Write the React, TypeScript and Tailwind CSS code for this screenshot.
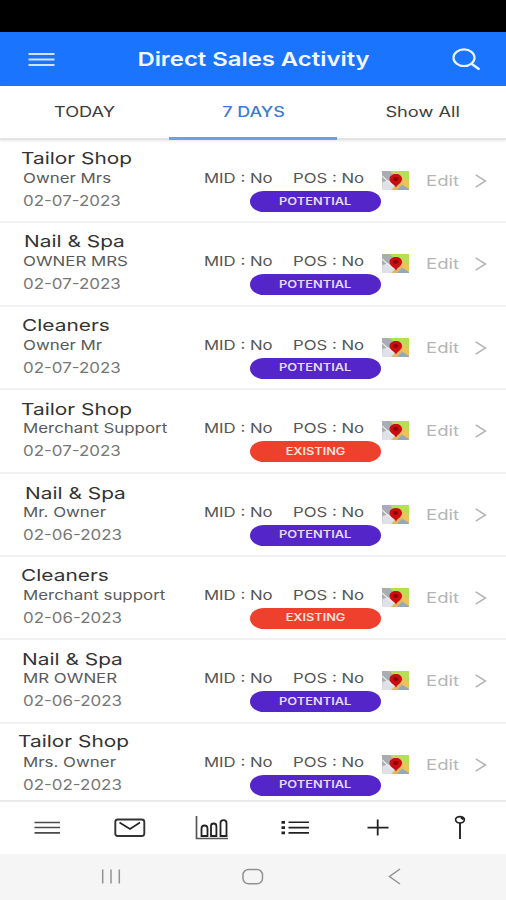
import clsx from 'clsx';

type Visit = {
  name: string;
  owner: string;
  date: string;
  existing?: boolean;
  // spacing of the business name differs slightly from row to row
  nameClass: string;
};

const visits: Visit[] = [
  { name: 'Tailor Shop', owner: 'Owner Mrs', date: '02-07-2023', nameClass: 'pl-[21px] pt-[8px]' },
  { name: 'Nail & Spa', owner: 'OWNER MRS', date: '02-07-2023', nameClass: 'pl-[23.5px] pt-[8px]' },
  { name: 'Cleaners', owner: 'Owner Mr', date: '02-07-2023', nameClass: 'pl-[21.5px] pt-[8px]' },
  { name: 'Tailor Shop', owner: 'Merchant Support', date: '02-07-2023', existing: true, nameClass: 'pl-[21px] pt-[9px]' },
  { name: 'Nail & Spa', owner: 'Mr. Owner', date: '02-06-2023', nameClass: 'pl-[24.5px] pt-[9px]' },
  { name: 'Cleaners', owner: 'Merchant support', date: '02-06-2023', existing: true, nameClass: 'pl-[20.5px] pt-[8px]' },
  { name: 'Nail & Spa', owner: 'MR OWNER', date: '02-06-2023', nameClass: 'pl-[22px] pt-[9px]' },
  { name: 'Tailor Shop', owner: 'Mrs. Owner', date: '02-02-2023', nameClass: 'pl-[17.5px] pt-[7px]' },
];

function Header() {
  return (
    <header className="flex h-[54px] items-center justify-between bg-[#1b74fe] pl-7 pr-[25px]">
      <svg width="27" height="16" viewBox="0 0 27 16" stroke="#cfe2ff" strokeWidth="2.2">
        <path d="M.5 3h26M.5 8.5h26M.5 14h26" />
      </svg>
      <h1 className="scale-x-[1.255] whitespace-nowrap text-[19px] font-[560] leading-none text-[#f3f8ff]">
        Direct Sales Activity
      </h1>
      <svg width="29" height="23" viewBox="0 0 29 23" fill="none" stroke="#eaf3ff" strokeWidth="2.2">
        <ellipse cx="12" cy="9.7" rx="10.5" ry="8.3" />
        <path d="m19.5 15.8 8 5.6" strokeWidth="2.5" />
      </svg>
    </header>
  );
}

function Tabs() {
  return (
    <nav className="grid h-[54px] grid-cols-3 border-b-2 border-[#e4e4e4] text-[14px] leading-none text-[#3c3c3c] shadow-[0_1px_3px_#0000001a]">
      <div className="flex items-center justify-center pl-px">
        <span className="scale-x-[1.3]">TODAY</span>
      </div>
      <div className="-mb-0.5 flex items-center justify-center border-b-[3px] border-[#6f9ee6] pl-0.5 pt-px font-medium text-[#3b7bd6]">
        <span className="scale-x-[1.28]">7 DAYS</span>
      </div>
      <div className="flex items-center justify-center pl-0.5">
        <span className="scale-x-[1.3]">Show All</span>
      </div>
    </nav>
  );
}

function MapThumb() {
  return (
    <svg width="27" height="19" viewBox="0 0 27 19">
      <rect width="27" height="19" fill="#c9ccd1" />
      <path d="M0 0h9l5 9-9 5-5-4z" fill="#a9adb1" />
      <path d="M8 0h19v14L12 5z" fill="#b5df55" />
      <path d="m14 9 13 8v2H13z" fill="#93a9ba" />
      <path d="m18 7 4-1 5 6v6L16 11z" fill="#edc25b" />
      <path d="m8 19 9-8 4 2-6 6z" fill="#e2b766" />
      <path d="m0 19 1-8 5-2 7 6-4 4z" fill="#dfe1e8" />
      <path d="m0 5 10 9" stroke="#e9ebee" strokeWidth="1.3" />
      <path d="M14 16.5c-1-3-6.500-4.500-6.500-8.500C7.500 5 10.500 3 14 3s6 2 6 5c0 4-5 5.500-6 8.500z" fill="#cb0c10" />
      <ellipse cx="13.700" cy="8" rx="2.500" ry="2" fill="#8a0708" />
    </svg>
  );
}

function VisitRow({ visit }: { visit: Visit }) {
  return (
    <li className="grid h-[83.4px] shrink-0 grid-cols-[203.5px_178.5px_44px_49px_1fr] border-b-2 border-[#f1f1f1]">
      <div className="whitespace-nowrap leading-none">
        <div className={clsx('h-[29px] text-[16.5px] leading-[20px] text-[#333]', visit.nameClass)}>
          <span className="inline-block origin-left scale-x-[1.265]">{visit.name}</span>
        </div>
        <div className="h-[20px] pl-[22.5px] text-[13.5px] leading-[18px] text-[#5a5a5a]">
          <span className="inline-block origin-left scale-x-[1.25]">{visit.owner}</span>
        </div>
        <div className="pl-[22.5px] pt-[2px] text-[14px] leading-[20px] text-[#777]">
          <span className="inline-block origin-left scale-x-[1.21]">{visit.date}</span>
        </div>
      </div>
      <div className="pt-[29px]">
        <div className="grid h-[22px] grid-cols-[89.5px_1fr] whitespace-nowrap text-[13.5px] leading-[18px] text-[#555]">
          <span className="origin-left scale-x-[1.24]">MID : No</span>
          <span className="origin-left scale-x-[1.24]">POS : No</span>
        </div>
        <div
          className={clsx(
            'ml-[46px] flex h-[21px] w-[131px] items-center justify-center rounded-[14px/10.5px] pb-0.5 text-[10px] font-semibold leading-none',
            visit.existing ? 'bg-[#ed412e] text-[#ffe3dd]' : 'bg-[#5425c9] text-[#e4dcfa]',
          )}
        >
          <span className={visit.existing ? 'scale-x-[1.27]' : 'scale-x-[1.28]'}>
            {visit.existing ? 'EXISTING' : 'POTENTIAL'}
          </span>
        </div>
      </div>
      <div className="pt-[31px]">
        <MapThumb />
      </div>
      <div className="pt-[31px] text-[14.5px] leading-[20px] text-[#b5b5b5]">
        <span className="inline-block origin-left scale-x-[1.28]">Edit</span>
      </div>
      <svg className="mt-[34px]" width="12" height="14" viewBox="0 0 12 14" fill="none" stroke="#b4b4b4" strokeWidth="1.5">
        <path d="m.7.8 9.8 6.2-9.8 6.2" />
      </svg>
    </li>
  );
}

function BottomNav() {
  return (
    <nav className="h-[54px] border-t-2 border-[#eaeaea] bg-white">
      <svg width="506" height="52" viewBox="0 802 506 52" fill="none" stroke="#222">
        <path d="M34.5 822.5h25.5M34.5 827.5h25.5M34.5 832.8h25.5" stroke="#4a4a4a" strokeWidth="1.7" />
        <rect x="115.300" y="819.5" width="29" height="16.5" rx="2.5" stroke="#333" strokeWidth="1.9" />
        <path d="m119.5 822.5 10.5 6.5 10-6.5" strokeWidth="1.6" />
        <path d="M196.5 816v22.5h31.500" stroke="#555" strokeWidth="1.7" />
        <path d="M201.500 836v-7.5q0-3 3-3t3 3v7.500zM211 836v-10q0-2.500 2.700-2.500t2.700 2.500v10zM220.500 836v-13q0-2.800 3-2.800t3 2.800v13z" strokeWidth="1.8" />
        <path d="M288.5 822.3h20.5M288.5 827.6h20.5M288.5 832.9h20.5" strokeWidth="1.6" />
        <path d="M281.5 822.3h3.5M281.5 827.6h3.5M281.5 832.9h3.5" strokeWidth="2.8" />
        <path d="M367.5 827.6h21M377.7 819.5v16" strokeWidth="1.8" />
        <ellipse cx="460" cy="819.8" rx="4.4" ry="3.2" strokeWidth="1.7" />
        <path d="M460 823v16" strokeWidth="1.9" />
        <path d="m461 817.5 2.500 2" strokeWidth="2" />
      </svg>
    </nav>
  );
}

function SystemBar() {
  return (
    <footer className="h-[46px] bg-[#f5f5f5]">
      <svg width="506" height="46" viewBox="0 854 506 46" fill="none" stroke="#929292" strokeWidth="1.5">
        <path d="M102.7 869.5v14M111 869.5v14M119.3 869.5v14" />
        <rect x="243" y="869.5" width="19.5" height="14.3" rx="5.5" />
        <path d="m400 869-10.5 7.5 10.5 7.5" />
      </svg>
    </footer>
  );
}

export default function App() {
  return (
    <div className="flex h-[900px] w-[506px] flex-col overflow-hidden bg-white font-['Inter','Liberation_Sans',sans-serif]">
      <div className="h-8 shrink-0 bg-black" />
      <Header />
      <Tabs />
      <ul className="flex h-[660px] flex-col overflow-hidden">
        {visits.map((visit, i) => (
          <VisitRow key={i} visit={visit} />
        ))}
      </ul>
      <BottomNav />
      <SystemBar />
    </div>
  );
}
